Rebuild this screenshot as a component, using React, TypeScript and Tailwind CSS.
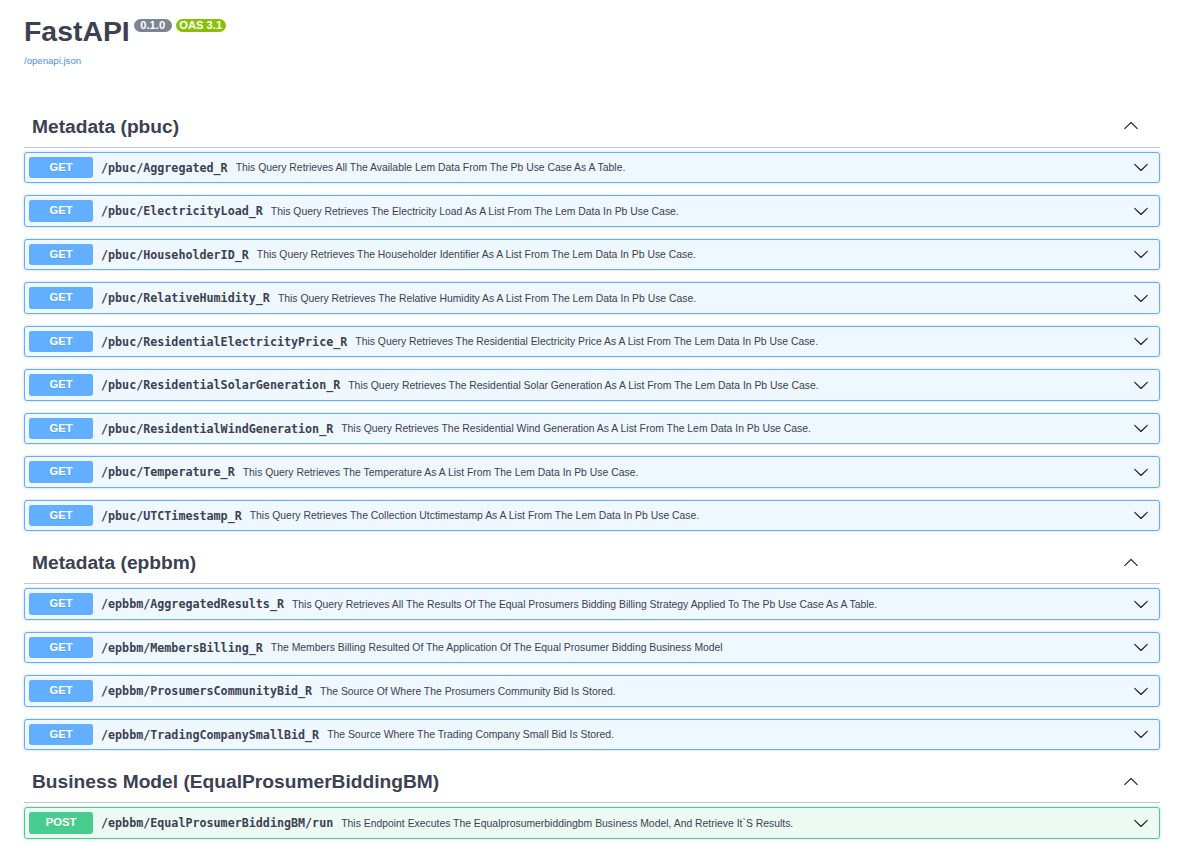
import React from 'react';

type Op = {
  method: 'GET' | 'POST';
  path: string;
  summary: string;
};

type Tag = {
  name: string;
  ops: Op[];
};

const tags: Tag[] = [
  {
    name: 'Metadata (pbuc)',
    ops: [
      { method: 'GET', path: '/pbuc/Aggregated_R', summary: 'This Query Retrieves All The Available Lem Data From The Pb Use Case As A Table.' },
      { method: 'GET', path: '/pbuc/ElectricityLoad_R', summary: 'This Query Retrieves The Electricity Load As A List From The Lem Data In Pb Use Case.' },
      { method: 'GET', path: '/pbuc/HouseholderID_R', summary: 'This Query Retrieves The Householder Identifier As A List From The Lem Data In Pb Use Case.' },
      { method: 'GET', path: '/pbuc/RelativeHumidity_R', summary: 'This Query Retrieves The Relative Humidity As A List From The Lem Data In Pb Use Case.' },
      { method: 'GET', path: '/pbuc/ResidentialElectricityPrice_R', summary: 'This Query Retrieves The Residential Electricity Price As A List From The Lem Data In Pb Use Case.' },
      { method: 'GET', path: '/pbuc/ResidentialSolarGeneration_R', summary: 'This Query Retrieves The Residential Solar Generation As A List From The Lem Data In Pb Use Case.' },
      { method: 'GET', path: '/pbuc/ResidentialWindGeneration_R', summary: 'This Query Retrieves The Residential Wind Generation As A List From The Lem Data In Pb Use Case.' },
      { method: 'GET', path: '/pbuc/Temperature_R', summary: 'This Query Retrieves The Temperature As A List From The Lem Data In Pb Use Case.' },
      { method: 'GET', path: '/pbuc/UTCTimestamp_R', summary: 'This Query Retrieves The Collection Utctimestamp As A List From The Lem Data In Pb Use Case.' },
    ],
  },
  {
    name: 'Metadata (epbbm)',
    ops: [
      { method: 'GET', path: '/epbbm/AggregatedResults_R', summary: 'This Query Retrieves All The Results Of The Equal Prosumers Bidding Billing Strategy Applied To The Pb Use Case As A Table.' },
      { method: 'GET', path: '/epbbm/MembersBilling_R', summary: 'The Members Billing Resulted Of The Application Of The Equal Prosumer Bidding Business Model' },
      { method: 'GET', path: '/epbbm/ProsumersCommunityBid_R', summary: 'The Source Of Where The Prosumers Community Bid Is Stored.' },
      { method: 'GET', path: '/epbbm/TradingCompanySmallBid_R', summary: 'The Source Where The Trading Company Small Bid Is Stored.' },
    ],
  },
  {
    name: 'Business Model (EqualProsumerBiddingBM)',
    ops: [
      { method: 'POST', path: '/epbbm/EqualProsumerBiddingBM/run', summary: 'This Endpoint Executes The Equalprosumerbiddingbm Business Model, And Retrieve It`S Results.' },
    ],
  },
];

// swagger-ui arrow glyphs
function ArrowDown({ className }: { className?: string }) {
  return (
    <svg viewBox="0 0 20 20" className={className} fill="currentColor">
      <path d="M17.418 6.109c.272-.268.709-.268.979 0s.271.701 0 .969l-7.908 7.83c-.27.268-.707.268-.979 0l-7.908-7.83c-.27-.268-.27-.701 0-.969.271-.268.709-.268.979 0L10 13.25l7.418-7.141z" />
    </svg>
  );
}

function ArrowUp({ className }: { className?: string }) {
  return (
    <svg viewBox="0 0 20 20" className={className} fill="currentColor">
      <path d="M17.418 14.908c.272.268.709.268.979 0s.271-.701 0-.969l-7.908-7.83c-.27-.268-.707-.268-.979 0l-7.908 7.83c-.27.268-.27.701 0 .969.271.268.709.268.979 0L10 7.767l7.418 7.141z" />
    </svg>
  );
}

function OpBlock({ op }: { op: Op }) {
  const isGet = op.method === 'GET';
  return (
    <div
      className={
        isGet
          ? 'mb-3 flex h-[31.5px] items-center rounded-[3px] border border-[#61affe] bg-[#eff7ff] pl-1 shadow-[0_0_3px_rgba(0,0,0,0.19)]'
          : 'mb-3 flex h-[31.5px] items-center rounded-[3px] border border-[#49cc90] bg-[#edfaf4] pl-1 shadow-[0_0_3px_rgba(0,0,0,0.19)]'
      }
    >
      <span
        className={
          isGet
            ? 'flex h-[21.5px] w-[64px] shrink-0 items-center justify-center rounded-[2.4px] bg-[#61affe] text-[11.2px] font-bold text-white [text-shadow:0_1px_0_rgba(0,0,0,0.1)]'
            : 'flex h-[21.5px] w-[64px] shrink-0 items-center justify-center rounded-[2.4px] bg-[#49cc90] text-[11.2px] font-bold text-white [text-shadow:0_1px_0_rgba(0,0,0,0.1)]'
        }
      >
        {op.method}
      </span>
      <span className="shrink-0 px-2 pt-[3px] font-['DejaVu_Sans_Mono',monospace] text-[11.7px] font-bold text-[#3b4151]">
        {op.path}
      </span>
      <span className="truncate pt-[2px] text-[10.4px] text-[#3b4151]">{op.summary}</span>
      <ArrowDown className="ml-auto mr-[10.5px] h-4 w-4 shrink-0 text-[#222]" />
    </div>
  );
}

function TagSection({ tag }: { tag: Tag }) {
  return (
    <section>
      <h3 className="mb-1 flex h-[41px] items-center border-b border-[#c4c6cb] pl-2 pr-[21px] text-[19.2px] font-bold text-[#3b4151]">
        <span className="pt-[1px]">{tag.name}</span>
        <ArrowUp className="ml-auto mb-[3px] h-4 w-4 text-[#222]" />
      </h3>
      {tag.ops.map((op) => (
        <OpBlock key={op.path} op={op} />
      ))}
    </section>
  );
}

export default function App() {
  return (
    <div className="min-h-[862px] bg-white pl-6 pr-[17px] font-['Liberation_Sans',Arial,sans-serif] text-[#3b4151]">
      {/* Info header */}
      <div className="pt-[15px] pb-[41px]">
        <div className="flex items-start">
          <h2 className="text-[28.4px] font-bold leading-[33px] text-[#3b4151]">FastAPI</h2>
          <span className="ml-[4px] mt-[4px] flex h-[12.5px] w-[38px] items-center justify-center rounded-full bg-[#7d8492] text-[11.2px] font-bold text-white">
            0.1.0
          </span>
          <span className="ml-[4px] mt-[4px] flex h-[12.5px] w-[50px] items-center justify-center rounded-full bg-[#89bf04] text-[11.2px] font-bold text-white">
            OAS 3.1
          </span>
        </div>
        <a href="#" className="mt-[6.5px] block text-[9.6px] leading-[11px] text-[#4990e2]">
          /openapi.json
        </a>
      </div>

      {tags.map((tag) => (
        <TagSection key={tag.name} tag={tag} />
      ))}
    </div>
  );
}
